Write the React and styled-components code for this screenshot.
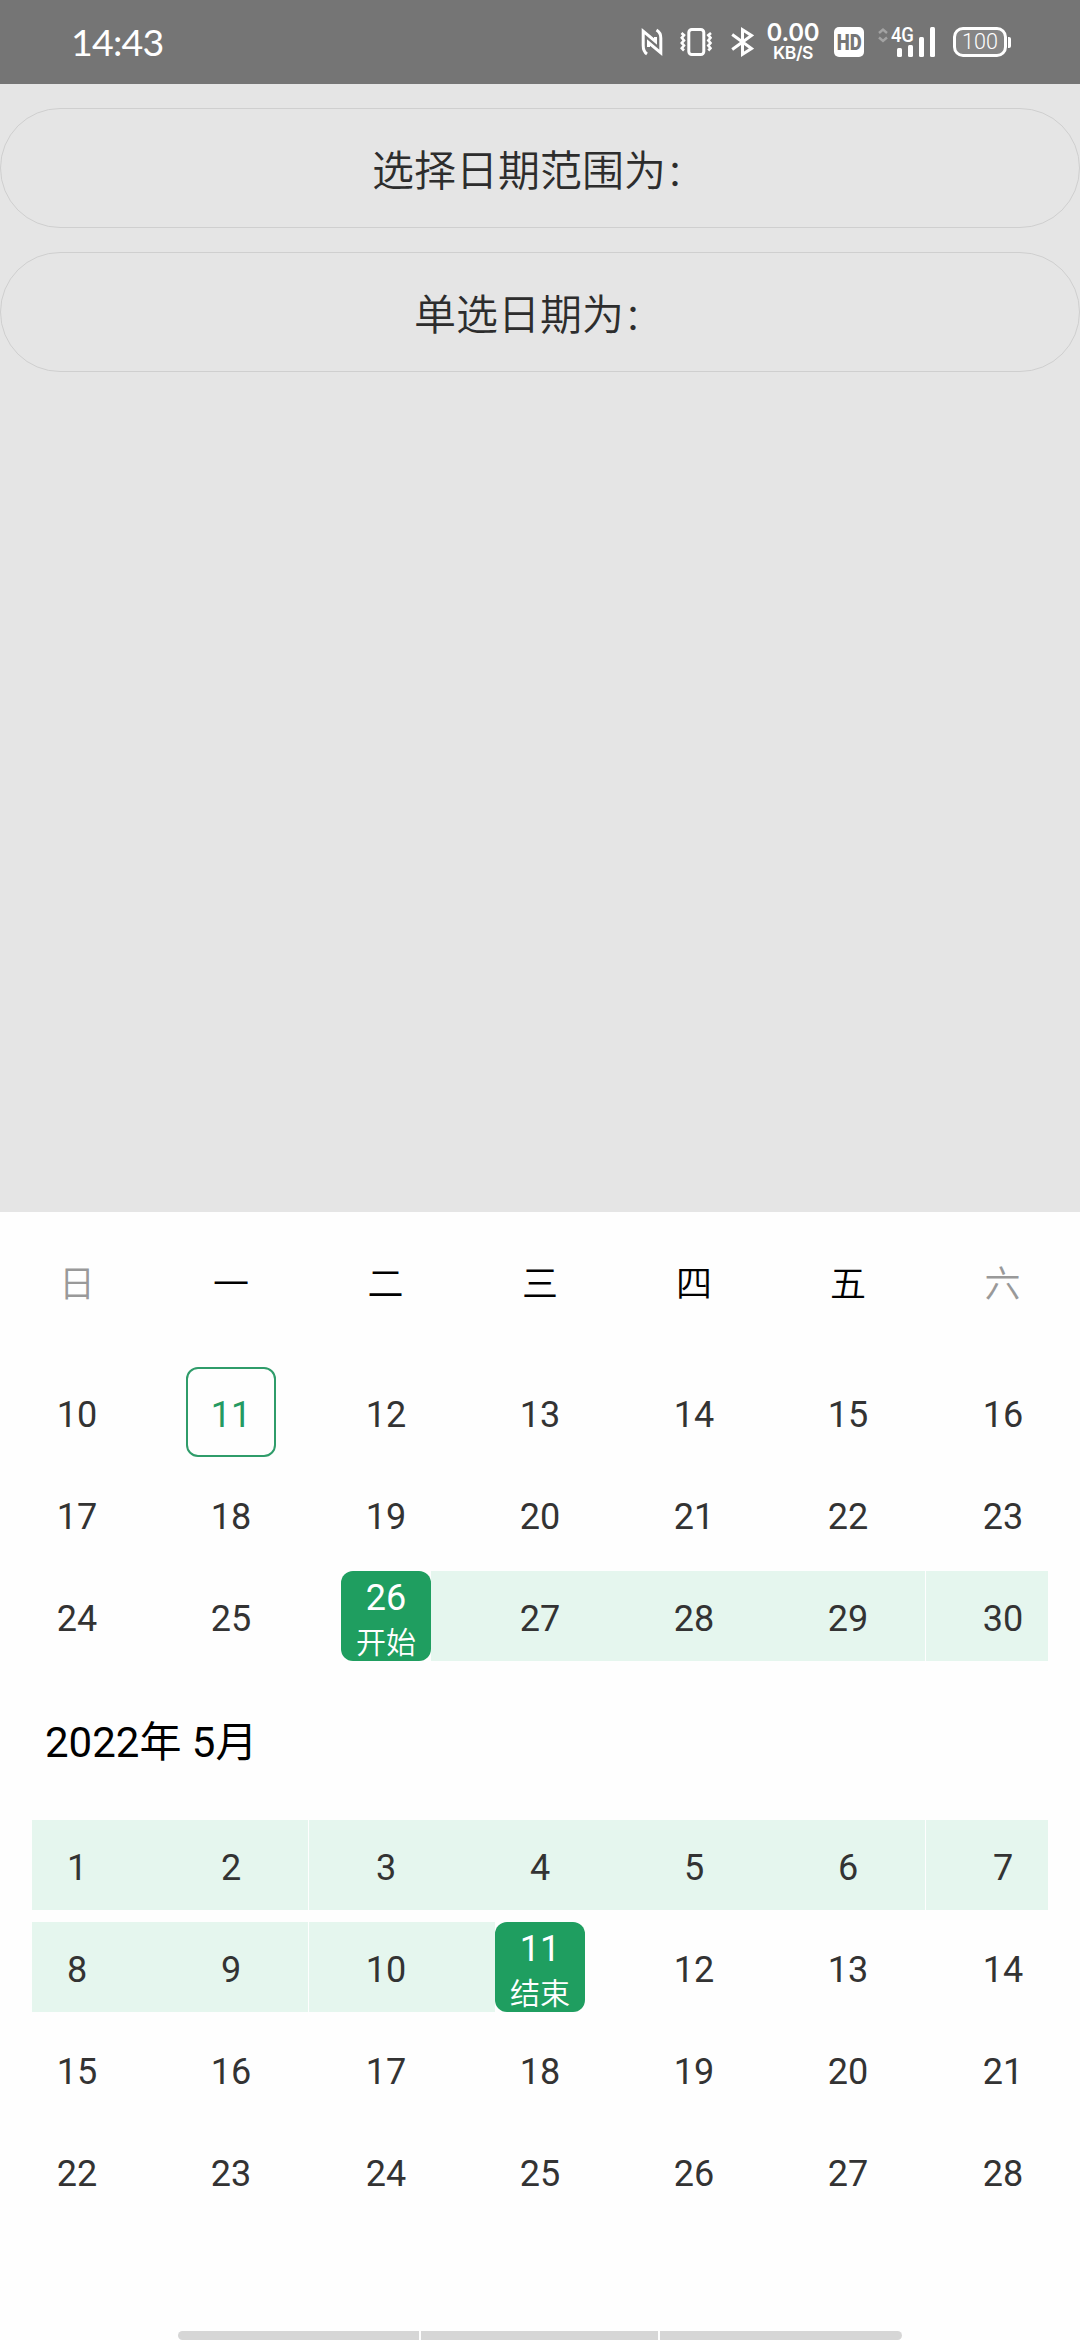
import React from "react";
import styled, { createGlobalStyle, css } from "styled-components";

const GlobalStyle = createGlobalStyle`
  * { box-sizing: border-box; }
  body {
    margin: 0;
    background: #e5e5e5;
    font-family: Roboto, "Noto Sans CJK SC", sans-serif;
  }
`;

const Screen = styled.div`
  width: 1080px;
  height: 2340px;
  display: flex;
  flex-direction: column;
  background: #e5e5e5;
  overflow: hidden;
`;

/* ---------- status bar ---------- */

const StatusBar = styled.header`
  height: 84px;
  flex: none;
  display: flex;
  align-items: center;
  justify-content: space-between;
  padding: 0 69px 0 71px;
  background: #757575;
  color: #fff;
`;

const Clock = styled.time`
  font: 400 37.5px/44px Lato, sans-serif;
  letter-spacing: -0.8px;
`;

const StatusIcons = styled.div`
  display: flex;
  align-items: center;
`;

const Icon = styled.svg`
  display: block;
  flex: none;
  margin-right: ${(p) => p.$gap || 0}px;
`;

const Speed = styled.div`
  width: 54px;
  margin-right: 14px;
  padding-top: 1px;
  display: flex;
  flex-direction: column;
  align-items: center;
  font-family: Inter, sans-serif;
`;

const SpeedValue = styled.span`
  font-size: 24px;
  line-height: 20px;
  font-weight: 600;
  letter-spacing: -0.2px;
`;

const SpeedUnit = styled.span`
  font-size: 17.5px;
  line-height: 19px;
  font-weight: 600;
  letter-spacing: -0.5px;
`;

const HdBadge = styled.div`
  width: 30px;
  height: 30px;
  margin-right: 14px;
  border-radius: 5px;
  background: #fff;
  color: #757575;
  display: flex;
  align-items: center;
  justify-content: center;
`;

const HdText = styled.span`
  font: 900 22.5px/30px Roboto, sans-serif;
  transform: scaleX(0.82);
`;

const Signal = styled.div`
  position: relative;
  width: 58px;
  height: 30px;
  margin-right: 17px;
`;

const NetworkType = styled.span`
  position: absolute;
  left: 13px;
  top: -2px;
  font: 500 21px/20px Roboto, sans-serif;
  letter-spacing: -0.4px;
  transform: scaleX(0.88);
  transform-origin: left;
`;

const Battery = styled.div`
  width: 54px;
  height: 30px;
  border: 3px solid #fff;
  border-radius: 10px;
  background: #858585;
  display: flex;
  align-items: center;
  justify-content: center;
  font: 300 21.5px/24px Roboto, sans-serif;
`;

const BatteryTip = styled.div`
  width: 3px;
  height: 11px;
  margin-left: 1px;
  border-radius: 0 2px 2px 0;
  background: #fff;
`;

/* ---------- page ---------- */

const Page = styled.main`
  flex: 1;
  display: flex;
  flex-direction: column;
  gap: 24px;
  padding-top: 24px;
`;

const PickerButton = styled.button`
  height: 120px;
  width: 100%;
  padding: 0;
  border: 1px solid #cfcfcf;
  border-radius: 60px;
  background: transparent;
  color: #2d2d2d;
  font: 350 42px/60px "Noto Sans CJK SC", sans-serif;
`;

const Colon = styled.span`
  display: inline-block;
  width: 42px;
  text-align: left;
  font-size: 36px;
  line-height: 52px;
`;

/* ---------- calendar sheet ---------- */

const Sheet = styled.section`
  height: 1128px;
  flex: none;
  display: flex;
  flex-direction: column;
  background: #fefefe;
`;

const Week = styled.div`
  display: grid;
  grid-template-columns: 154px 154px 155px 154px 154px 154px 155px;
`;

const WeekHeader = styled(Week)`
  height: 149px;
  padding-top: 43px;
`;

const WeekName = styled.span`
  text-align: center;
  font: 350 36px/52px "Noto Sans CJK SC", sans-serif;
  color: ${(p) => (p.$weekend ? "#999" : "#000")};
`;

const DayCell = styled.div`
  height: 90px;
  margin: 6px 0;
  display: flex;
  &:nth-child(4n + 3) { margin-left: 1px; }
`;

const Side = styled.span`
  flex: 1;
  background: ${(p) => (p.$filled ? "#e5f6ee" : "transparent")};
`;

const DayBox = styled.div`
  width: 90px;
  padding-top: 5px;
  display: flex;
  flex-direction: column;
  align-items: center;
  justify-content: center;
  color: #333;
  font-size: 36px;
  line-height: 42px;
  ${(p) => p.$state === "range" && css`background: #e5f6ee;`}
  ${(p) => p.$state === "today" && css`
    border: 2px solid #2f9c6a;
    border-radius: 12px;
    color: #249a62;
  `}
  ${(p) => p.$state === "edge" && css`
    border-radius: 12px;
    background: #1f9e60;
    color: #fff;
  `}
`;

const DayNote = styled.span`
  font: 350 30px/42px "Noto Sans CJK SC", sans-serif;
`;

const MonthTitle = styled.h2`
  height: 147px;
  margin: 0;
  padding: 0 45px;
  color: #000;
  font-family: Roboto, "Noto Sans CJK SC", sans-serif;
  font-size: 42px;
  font-weight: 400;
  line-height: 152px;
`;

const HomeBar = styled.div`
  width: 724px;
  height: 9px;
  margin: auto auto 0;
  display: grid;
  grid-template-columns: 241px 237px 242px;
  gap: 2px;
  border-radius: 5px;
  overflow: hidden;
`;

const HomeSegment = styled.span`
  background: #d6d6d6;
`;

const weekNames = ["日", "一", "二", "三", "四", "五", "六"];

const rangeCell = (day) => ({ day, state: "range", left: true, right: true });
const plain = (from, count) =>
  Array.from({ length: count }, (_, i) => ({ day: from + i }));

const aprilWeeks = [
  [{ day: 10 }, { day: 11, state: "today" }, ...plain(12, 5)],
  plain(17, 7),
  [
    ...plain(24, 2),
    { day: 26, state: "edge", note: "开始", right: true },
    rangeCell(27),
    rangeCell(28),
    rangeCell(29),
    { day: 30, state: "range", left: true },
  ],
];

const mayWeeks = [
  [
    { day: 1, state: "range", right: true },
    rangeCell(2),
    rangeCell(3),
    rangeCell(4),
    rangeCell(5),
    rangeCell(6),
    { day: 7, state: "range", left: true },
  ],
  [
    { day: 8, state: "range", right: true },
    rangeCell(9),
    rangeCell(10),
    { day: 11, state: "edge", note: "结束", left: true },
    ...plain(12, 3),
  ],
  plain(15, 7),
  plain(22, 7),
];

function Weeks({ weeks }) {
  return weeks.map((week) => (
    <Week key={week[0].day}>
      {week.map((d) => (
        <DayCell key={d.day}>
          <Side $filled={d.left} />
          <DayBox $state={d.state}>
            <span>{d.day}</span>
            {d.note && <DayNote>{d.note}</DayNote>}
          </DayBox>
          <Side $filled={d.right} />
        </DayCell>
      ))}
    </Week>
  ));
}

function NfcIcon() {
  return (
    <Icon $gap={17} width="22" height="30" viewBox="0 0 22 30" fill="none" stroke="#fff" strokeWidth="3">
      <path d="M6 27Q2.200 24.500 2.200 18.500V4.200L14.500 14.500V10" />
      <path d="M15.500 3Q19.800 5.500 19.800 11V25.800L7.500 15.500V20" />
    </Icon>
  );
}

function VibrateIcon() {
  return (
    <Icon $gap={19} width="32" height="30" viewBox="0 0 32 30" fill="none" stroke="#fff">
      <rect x="8.800" y="2.400" width="15" height="25.200" rx="3" strokeWidth="3" />
      <path strokeWidth="2.600" d="M1.500 6L4 8.200L1.800 10.800L4 13.400L1.800 16L4 18.600L1.800 21.200L4 23.500M31 6L28.300 8.200L30.500 10.800L28.300 13.400L30.500 16L28.300 18.600L30.500 21.200L28.300 23.500" />
    </Icon>
  );
}

function BluetoothIcon() {
  return (
    <Icon $gap={12} width="23" height="30" viewBox="0 0 23 30" fill="none" stroke="#fff" strokeWidth="3">
      <path d="M1.200 7.500L20.500 21.500L11.500 27.200V2.800L20.500 8.500L1.200 22.500" />
    </Icon>
  );
}

function SignalBars() {
  return (
    <Icon width="58" height="30" viewBox="0 0 58 30">
      <g fill="none" stroke="#a3a3a3" strokeWidth="2.400">
        <path d="M1 6L5 2.500L9 6M1 10.500L5 14L9 10.500" />
      </g>
      <g fill="#fff">
        <rect x="19" y="21" width="5" height="9" rx="1.500" />
        <rect x="30" y="18" width="5" height="12" rx="1.500" />
        <rect x="41" y="10" width="5" height="20" rx="1.500" />
        <rect x="52" y="0" width="5" height="30" rx="1.500" />
      </g>
    </Icon>
  );
}

export default function App() {
  return (
    <Screen>
      <GlobalStyle />
      <StatusBar>
        <Clock>14:43</Clock>
        <StatusIcons>
          <NfcIcon />
          <VibrateIcon />
          <BluetoothIcon />
          <Speed>
            <SpeedValue>0.00</SpeedValue>
            <SpeedUnit>KB/S</SpeedUnit>
          </Speed>
          <HdBadge>
            <HdText>HD</HdText>
          </HdBadge>
          <Signal>
            <SignalBars />
            <NetworkType>4G</NetworkType>
          </Signal>
          <Battery>100</Battery>
          <BatteryTip />
        </StatusIcons>
      </StatusBar>

      <Page>
        <PickerButton>选择日期范围为<Colon>：</Colon></PickerButton>
        <PickerButton>单选日期为<Colon>：</Colon></PickerButton>
      </Page>

      <Sheet>
        <WeekHeader>
          {weekNames.map((name, i) => (
            <WeekName key={name} $weekend={i === 0 || i === 6}>
              {name}
            </WeekName>
          ))}
        </WeekHeader>
        <Weeks weeks={aprilWeeks} />
        <MonthTitle>2022年 5月</MonthTitle>
        <Weeks weeks={mayWeeks} />
        <HomeBar>
          <HomeSegment />
          <HomeSegment />
          <HomeSegment />
        </HomeBar>
      </Sheet>
    </Screen>
  );
}
